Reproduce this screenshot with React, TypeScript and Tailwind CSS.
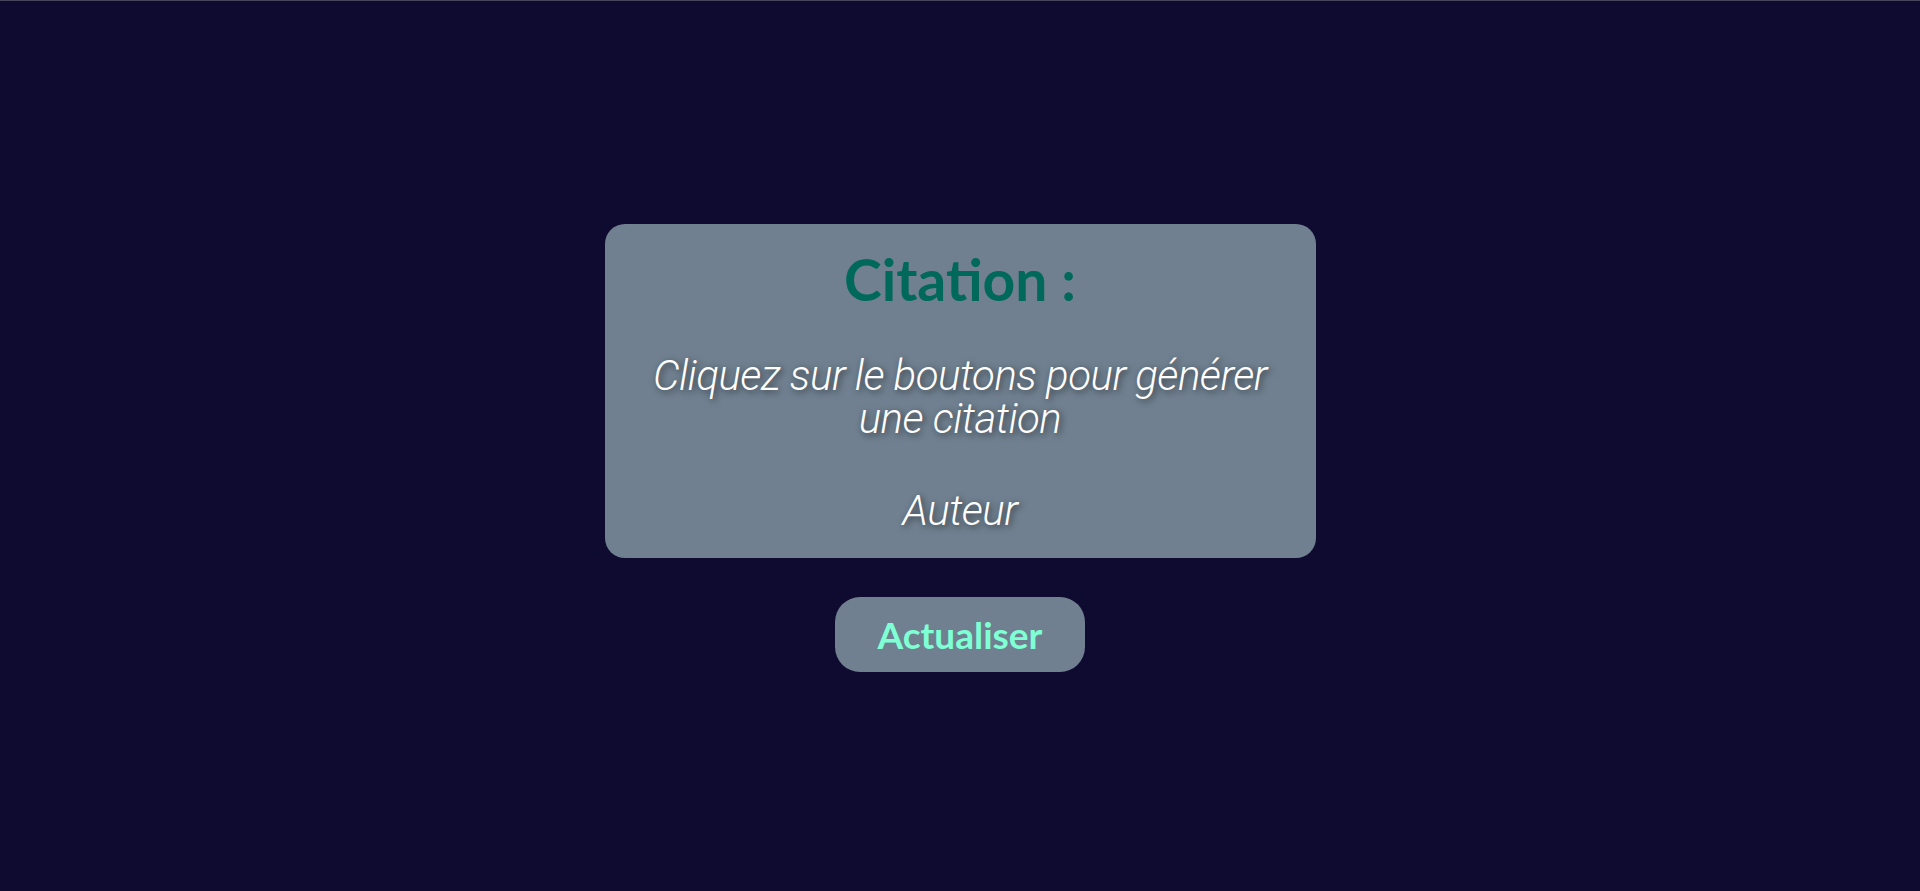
import React from 'react';

const quote =
  "font-['Roboto',sans-serif] italic font-light text-[42px] leading-[43px] tracking-[-0.5px] text-white text-center [text-shadow:2px_2px_7px_rgba(0,0,0,0.6)]";

export default function App() {
  return (
    <div className="min-h-screen bg-[#0f0a2f] border-t border-[#48445c] pt-1 flex flex-col items-center justify-center">
      <div className="w-[711px] h-[334px] rounded-[20px] bg-[#708090] flex flex-col items-center px-8 pt-[21px]">
        <h1 className="font-['Lato',sans-serif] font-bold text-[57px] leading-[1.2] text-[#00695c]">Citation :</h1>
        <p className={`mt-[41px] ${quote}`}>Cliquez sur le boutons pour générer une citation</p>
        <p className={`mt-[49px] ${quote}`}>Auteur</p>
      </div>
      <button className="mt-[39px] w-[250px] h-[75px] rounded-[25px] bg-[#708090] font-['Lato',sans-serif] font-bold text-[37px] text-[#7fffd4]">
        Actualiser
      </button>
    </div>
  );
}
